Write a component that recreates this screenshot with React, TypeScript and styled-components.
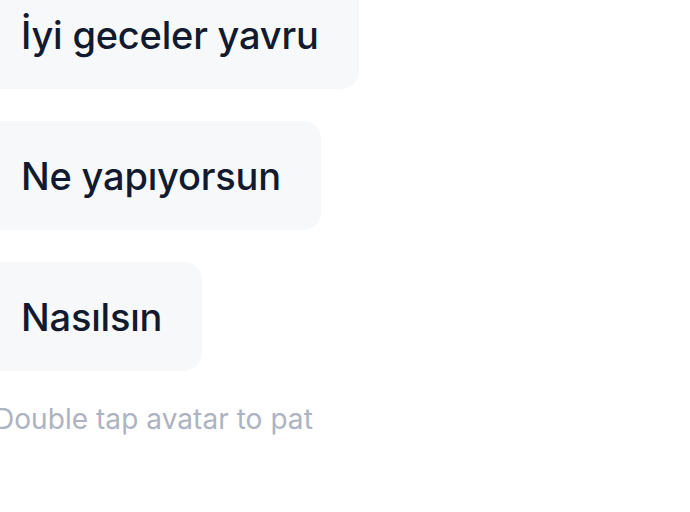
import styled, { createGlobalStyle } from "styled-components";

const GlobalStyle = createGlobalStyle`
    html, body {
        margin: 0;
        padding: 0;
        background: #ffffff;
        overflow: hidden;
    }
    body {
        font-family: Inter, "Noto Sans", "DejaVu Sans", sans-serif;
    }
`;

const Page = styled.div`
    width: 690px;
    height: 512px;
    overflow: hidden;
`;

const Thread = styled.div`
    display: flex;
    flex-direction: column;
    align-items: flex-start;
    gap: 32px;
    margin-top: -20px;
    margin-left: -24px;
`;

const Bubble = styled.div`
    box-sizing: border-box;
    height: 109px;
    display: flex;
    align-items: center;
    padding: 0 40px 0 45px;
    background: #f7f8fa;
    border-radius: 18px;
    color: #111a2e;
    font-size: 38px;
    font-weight: 500;
    letter-spacing: -0.2px;
    white-space: nowrap;
`;

const Hint = styled.div`
    margin-top: -1px;
    padding-left: 18px;
    color: #adb3c1;
    font-size: 28px;
    letter-spacing: 0.05px;
    white-space: nowrap;
`;

const messages = ["İyi geceler yavru", "Ne yapıyorsun", "Nasılsın"];

function App() {
    return (
        <>
            <GlobalStyle />
            <Page>
                <Thread>
                    {messages.map((m, i) => (
                        <Bubble key={i}>{m}</Bubble>
                    ))}
                    <Hint>Double tap avatar to pat</Hint>
                </Thread>
            </Page>
        </>
    );
}

export default App;
